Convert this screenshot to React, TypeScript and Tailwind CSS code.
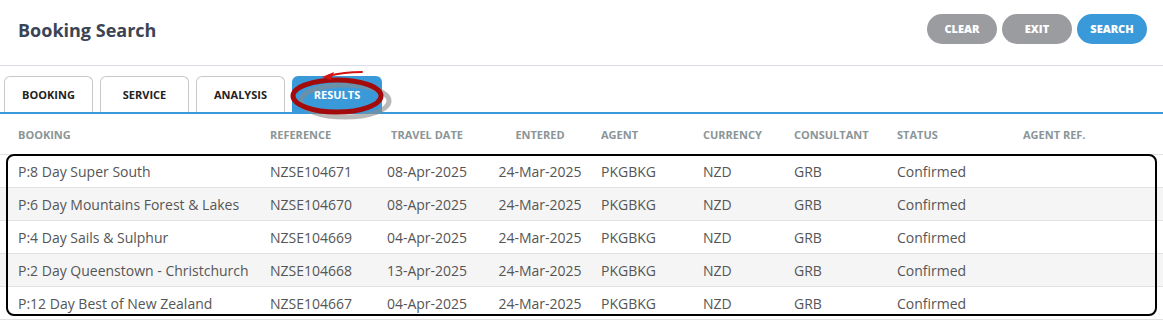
import React from "react";

const rows = [
  ["P:8 Day Super South", "NZSE104671", "08-Apr-2025"],
  ["P:6 Day Mountains Forest & Lakes", "NZSE104670", "08-Apr-2025"],
  ["P:4 Day Sails & Sulphur", "NZSE104669", "04-Apr-2025"],
  ["P:2 Day Queenstown - Christchurch", "NZSE104668", "13-Apr-2025"],
  ["P:12 Day Best of New Zealand", "NZSE104667", "04-Apr-2025"],
];

const cols = "grid grid-cols-[262px_112px_106px_120px_100px_91px_103px_106px_1fr]";

export default function App() {
  return (
    <div className="h-[326px] w-[1163px] overflow-hidden bg-white font-['Open_Sans',sans-serif]">
      <header className="flex h-[66px] items-center justify-between border-b border-[#dcdce8] pl-[18px] pr-[16px]">
        <h1 className="mt-[-4px] text-[18px] font-bold text-[#3a4455]">Booking Search</h1>
        <div className="mt-[-7px] flex gap-[5px]">
          {["CLEAR", "EXIT"].map((b) => (
            <button
              key={b}
              className="h-[30px] w-[70px] rounded-full bg-[#9a9c9f] text-[11px] font-extrabold text-white"
            >
              {b}
            </button>
          ))}
          <button className="h-[30px] w-[70px] rounded-full bg-[#3a9ad9] text-[11px] font-extrabold text-white">
            SEARCH
          </button>
        </div>
      </header>

      <nav className="relative mt-[10px] flex gap-[7px] border-b-2 border-[#3a9ad9] pl-[4px]">
        {["BOOKING", "SERVICE", "ANALYSIS"].map((t) => (
          <div
            key={t}
            className="flex h-[36px] w-[89px] items-center justify-center rounded-t-[6px] border border-b-0 border-[#c8c8c8] pt-[2px] text-[11px] font-bold text-[#222]"
          >
            {t}
          </div>
        ))}
        <div className="flex h-[36px] w-[90px] items-center justify-center rounded-t-[6px] bg-[#3a9ad9] pt-[2px] text-[11px] font-bold text-white">
          RESULTS
        </div>
        {/* red marker annotation */}
        <svg className="pointer-events-none absolute left-[286px] top-[-8px]" width="112" height="52" viewBox="0 0 112 52">
          <ellipse cx="55" cy="31" rx="44" ry="16" fill="none" stroke="#8a8a8a" strokeWidth="5" opacity="0.6" transform="translate(4 2)" />
          <ellipse cx="51" cy="28" rx="44" ry="16" fill="none" stroke="#a30a0a" strokeWidth="5" />
          <path d="M42 8 C54 5 64 4 76 4" fill="none" stroke="#d41414" strokeWidth="2" strokeLinecap="round" />
          <path d="M36 9 L48 4 L45 12 Z" fill="#d41414" />
        </svg>
      </nav>

      <div className={`${cols} h-[41px] items-center border-b border-[#e2e2e2] pt-[2px] text-[11px] font-bold text-[#8a9597]`}>
        <div className="pl-[18px]">BOOKING</div>
        <div className="pl-[8px]">REFERENCE</div>
        <div className="text-center">TRAVEL DATE</div>
        <div className="text-center">ENTERED</div>
        <div className="pl-[1px]">AGENT</div>
        <div className="pl-[3px]">CURRENCY</div>
        <div className="pl-[3px]">CONSULTANT</div>
        <div className="pl-[3px]">STATUS</div>
        <div className="pl-[23px]">AGENT REF.</div>
      </div>

      <div className="relative">
        {rows.map(([name, ref, travel], i) => (
          <div
            key={ref}
            className={`${cols} h-[33px] items-center border-b border-[#e2e2e2] text-[14px] text-[#555] ${
              i % 2 === 1 ? "bg-[#f5f5f5]" : "bg-white"
            }`}
          >
            <div className="whitespace-nowrap pl-[18px]">{name}</div>
            <div className="pl-[8px]">{ref}</div>
            <div className="text-center">{travel}</div>
            <div className="text-center">24-Mar-2025</div>
            <div className="pl-[1px]">PKGBKG</div>
            <div className="pl-[3px]">NZD</div>
            <div className="pl-[3px]">GRB</div>
            <div className="pl-[3px]">Confirmed</div>
            <div />
          </div>
        ))}
        {/* black outline annotation */}
        <div className="pointer-events-none absolute left-[6px] right-[6px] top-[-1px] h-[162px] rounded-[8px] border-2 border-black" />
      </div>
    </div>
  );
}
